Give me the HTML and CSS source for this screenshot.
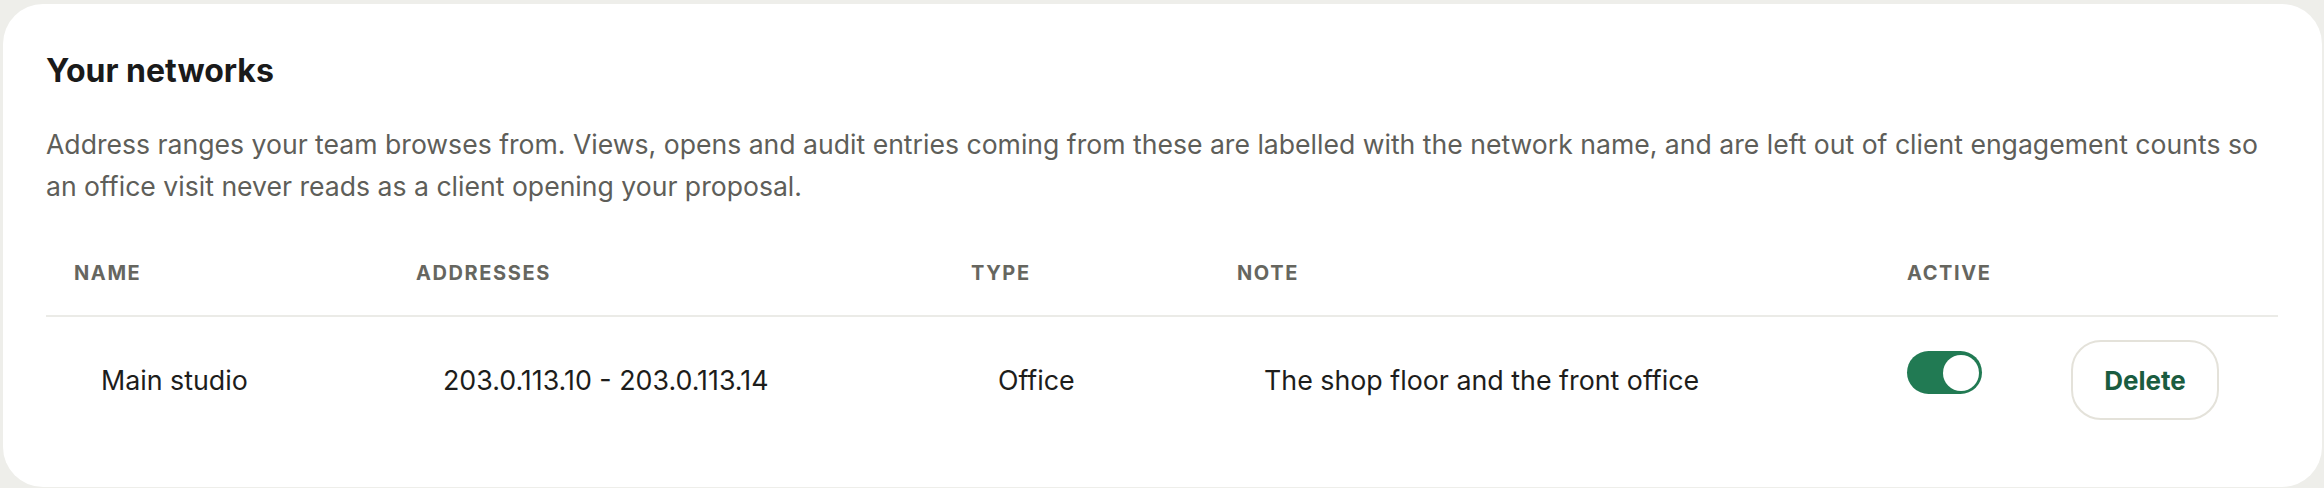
FILE: index.html
```html
<!DOCTYPE html>
<html lang="en">
<head>
    <meta charset="UTF-8">
    <meta name="viewport" content="width=device-width, initial-scale=1.0">
    <title>Your networks</title>
    <link rel="stylesheet" href="styles.css">
</head>
<body>
    <section class="card">
        <h2 class="card-title">Your networks</h2>
        <p class="card-text">Address ranges your team browses from. Views, opens and audit entries coming from these are labelled with the network name, and are left out of client engagement counts so an office visit never reads as a client opening your proposal.</p>
        <table class="networks">
            <colgroup>
                <col class="col-name">
                <col class="col-addr">
                <col class="col-type">
                <col class="col-note">
                <col class="col-active">
                <col>
            </colgroup>
            <thead>
                <tr>
                    <th>Name</th>
                    <th>Addresses</th>
                    <th>Type</th>
                    <th>Note</th>
                    <th>Active</th>
                    <th></th>
                </tr>
            </thead>
            <tbody>
                <tr>
                    <td class="cell">Main studio</td>
                    <td class="cell">203.0.113.10 - 203.0.113.14</td>
                    <td class="cell">Office</td>
                    <td class="cell">The shop floor and the front office</td>
                    <td class="cell-toggle">
                        <button class="toggle on" aria-label="Active"><span class="knob"></span></button>
                    </td>
                    <td class="cell-action">
                        <button class="btn-delete">Delete</button>
                    </td>
                </tr>
            </tbody>
        </table>
    </section>
</body>
</html>
```

FILE: styles.css
```css
body {
    margin: 0;
    padding: 4px 2px 2px 3px;
    background-color: #eeeeea;
    font-family: Inter, "Noto Sans", sans-serif;
    color: #1d1d1b;
}
.card {
    background: #fff;
    border-radius: 40px;
    padding: 47px 44px 44px 43px;
}
.card-title {
    margin: 0;
    font-size: 32px;
    line-height: 40px;
    font-weight: 700;
    color: #1a1a1a;
}
.card-text {
    margin: 32px 0 0;
    font-size: 26.6px;
    line-height: 42px;
    color: #5e5e59;
}
.networks {
    width: 100%;
    margin-top: 26px;
    border-collapse: collapse;
    table-layout: fixed;
}
.col-name { width: 342px; }
.col-addr { width: 555px; }
.col-type { width: 266px; }
.col-note { width: 670px; }
.col-active { width: 164px; }
.networks th {
    text-align: left;
    padding: 28px 28px 30px;
    font-size: 20px;
    line-height: 24px;
    font-weight: 700;
    letter-spacing: 0.08em;
    text-transform: uppercase;
    color: #66665f;
    border-bottom: 2px solid #ebebe7;
}
.networks td {
    padding: 23px 28px;
    font-size: 26.8px;
    line-height: 32px;
    vertical-align: middle;
}
.networks td.cell {
    padding-left: 55px;
}
.networks td.cell-toggle {
    vertical-align: top;
    padding-top: 34px;
}
.toggle {
    display: flex;
    align-items: center;
    justify-content: flex-end;
    width: 75px;
    height: 43px;
    padding: 0 3px;
    border: none;
    border-radius: 22px;
    background: #217a53;
    cursor: pointer;
}
.knob {
    width: 36px;
    height: 36px;
    border-radius: 50%;
    background: #fff;
}
.btn-delete {
    width: 148px;
    height: 80px;
    border: 2px solid #e4e2da;
    border-radius: 30px;
    background: #fff;
    font-family: inherit;
    font-size: 26px;
    font-weight: 650;
    color: #1a5c40;
    cursor: pointer;
}
```
